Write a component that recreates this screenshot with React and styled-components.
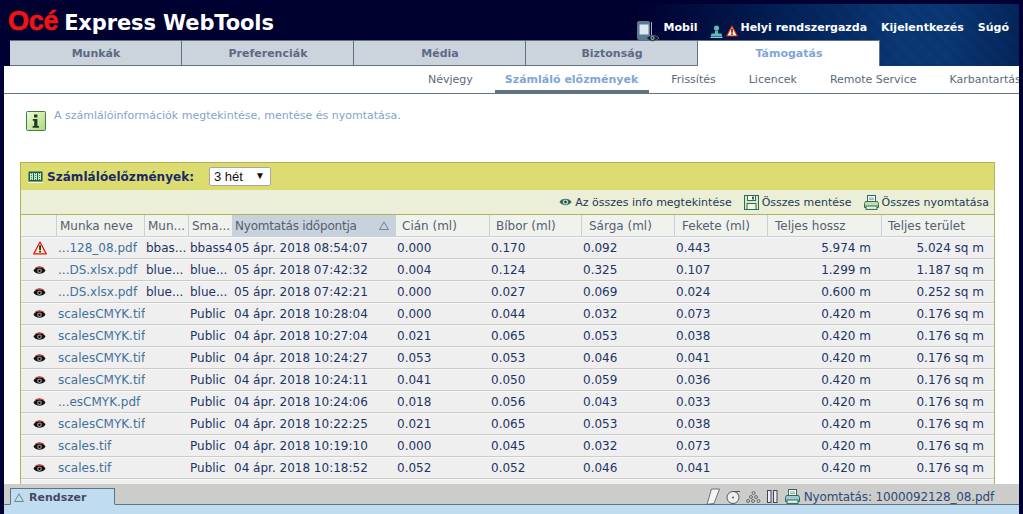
import React from "react";
import styled, { createGlobalStyle } from "styled-components";

const Global = createGlobalStyle`
  html, body { margin: 0; padding: 0; height: 100%; background: #000033; overflow: hidden; }
  #root { height: 100%; }
  * { box-sizing: border-box; }
`;
const Page = styled.div`
  width: 1023px; height: 514px; padding: 0 4px; display: flex; flex-direction: column;
  font-family: "DejaVu Sans", Verdana, sans-serif; overflow: hidden;
`;
const Header = styled.header`
  height: 62px; margin-top: 4px; flex: none; display: flex; flex-direction: column;
  background:
    repeating-linear-gradient(45deg, rgba(0,0,0,.12) 0 1px, transparent 1px 2px),
    linear-gradient(90deg, #000033 0, #000033 62%, #022058 76%, #0a3a7a 88%, #0a3a7a 93%, #05275f 100%);
`;
const TopRow = styled.div`
  height: 36px; display: flex; align-items: flex-start; justify-content: space-between; padding-left: 4px;
`;
const Logo = styled.div`display: flex; align-items: baseline; gap: 6px; padding-top: 2px;`;
const LogoRed = styled.span`
  font: 900 27px/30px "Liberation Sans", Arial, sans-serif; color: #f01414; letter-spacing: -.3px;
  -webkit-text-stroke: .6px #f01414;
`;
const LogoWhite = styled.span`
  font: 700 21px/30px "DejaVu Sans", Verdana, sans-serif; color: #fff; letter-spacing: -.12px;
`;
const UserNav = styled.nav`display: flex; align-items: center; height: 42px; padding-right: 10px; position: relative; top: 2px;`;
const UserLink = styled.span`
  font-size: 11px; font-weight: 700; color: #fff; white-space: nowrap; margin-left: ${p => p.$gap || 0}px;
`;
const IconSlot = styled.span`display: inline-flex; flex: none; margin-left: ${p => p.$gap || 0}px; position: relative; top: ${p => p.$top || 0}px;`;
const Tabs = styled.div`display: flex; height: 26px; padding-left: 6px; flex: none;`;
const Tab = styled.div`
  width: ${p => p.$active ? 182 : 172}px; height: 26px; display: flex; align-items: center; justify-content: center;
  font-size: 11px; font-weight: 700; padding-left: 1px;
  background: ${p => p.$active ? "#fff" : "#cbd4dc"};
  color: ${p => p.$active ? "#7fa6d6" : "#5b6a85"};
  border-top: 1px solid #5f7383;
  border-right: 1px solid #5f7383;
  border-bottom: ${p => p.$active ? "none" : "1px solid #5f7383"};
`;
const SubNav = styled.nav`
  height: 28px; flex: none; background: #fff; border-bottom: 1px solid #5f7383; display: flex; padding-left: 413px; overflow: hidden; gap: 11px;
`;
const SubItem = styled.span`
  height: 27px; padding: 2px 11px 0 ${p => p.$active ? 10 : 11}px; display: flex; align-items: center; white-space: nowrap; font-size: 11px;
  color: ${p => p.$active ? "#7fa6d6" : "#5a6a78"}; font-weight: ${p => p.$active ? 700 : 400};
  border-bottom: 3px solid ${p => p.$active ? "#5f7383" : "transparent"};
`;
const Main = styled.main`flex: 1; min-height: 0; background: #fff; overflow: hidden; padding: 17px 24px 0 16px;`;
const Info = styled.div`display: flex; align-items: flex-start; gap: 8px; padding-left: 6px; height: 51px; font-size: 11px; color: #85a3cc;`;
const InfoText = styled.span`position: relative; top: -2px;`;
const Panel = styled.section`border: 1px solid #b3b15a; border-bottom: none; width: 975px;`;
const TitleBar = styled.div`height: 27px; background: #dcdc70; display: flex; align-items: center; padding-left: 7px;`;
const Title = styled.span`font-size: 12px; font-weight: 700; color: #1b2a66; margin-left: 4px; width: 162px; white-space: nowrap; letter-spacing: .05px;`;
const FakeSelect = styled.div`
  width: 62px; height: 19px; background: #fff; border: 1px solid #a6a6a6; border-radius: 2px;
  font: 13px/17px "Liberation Sans", Arial, sans-serif; color: #111; padding: 0 5px 0 4px; display: flex; justify-content: space-between;
`;
const Arrow = styled.span`font-size: 10px; line-height: 16px;`;
const ActionBar = styled.div`
  height: 25px; background: #ebefd8; border-bottom: 1px solid #b3b15a; display: flex; align-items: center; justify-content: flex-end; padding-right: 5px; font-size: 11px; color: #233a50;
`;
const Action = styled.span`display: flex; align-items: center; gap: 3px; margin-left: 12px; white-space: nowrap;`;
const Table = styled.table`
  border-collapse: separate; border-spacing: 0; table-layout: fixed; width: 973px; font-size: 12px;
`;
const Th = styled.th`
  height: 22px; font-weight: 400; text-align: left; color: #55606e; white-space: nowrap; overflow: hidden; padding: 0 0 0 ${p => p.$pad ?? 6}px;
  background: ${p => p.$sorted ? "#c8d2dc" : "#f0f2ee"};
  border-right: 1px solid #c6d0d6; border-bottom: 1px solid #c6d0d6;
  &:last-child { border-right: none; }
`;
const SortLabel = styled.span`letter-spacing: -.2px;`;
const SortWrap = styled.span`display: flex; justify-content: space-between; padding-right: 6px; align-items: center;`;
const Tr = styled.tr`background: #efefef;`;
const Td = styled.td`
  height: 22px; padding: 0 ${p => p.$right || 0}px 0 1px; white-space: nowrap; overflow: hidden;
  color: ${p => p.$link ? "#41729c" : "#1d3566"}; text-align: ${p => p.$right ? "right" : "left"};
  border-top: 1px solid #f8f8f8; border-bottom: 1px solid #c9ccc9;
`;
const IconCell = styled.div`display: flex; justify-content: center; align-items: center;`;
const Footer = styled.footer`flex: none; height: 30px; display: flex; flex-direction: column; background: #c0dcf0;`;
const FootBar = styled.div`
  height: 21px; background: #cccccb; border-bottom: 1px solid #5f7383; display: flex; justify-content: space-between; align-items: flex-end; padding: 0 25px 0 6px;
`;
const FootTab = styled.div`
  width: 105px; height: 17px; margin-bottom: -1px; background: #c0dcf0; border: 1px solid #5f7383; border-bottom-color: #c0dcf0;
  display: flex; align-items: center; gap: 5px; padding: 1px 0 0 3px; font-size: 11px; font-weight: 700; color: #444a66;
`;
const Status = styled.div`display: flex; align-items: center; height: 20px; padding-top: 5px; font-size: 12px; color: #2c4a78; gap: 6px; letter-spacing: -.14px;`;
const StatusText = styled.span`margin-left: -2px;`;

const Eye = () => (
  <svg width="13" height="9" viewBox="0 0 14 10">
    <path d="M0.3 5 C3 .2 11 .2 13.7 5 C11 9.8 3 9.8 .3 5Z" fill="#111" />
    <path d="M2 2.6 C5 0.5 9 0.5 12 2.6" stroke="#d01818" strokeWidth="1.2" fill="none" />
    <circle cx="7" cy="5.4" r="2.7" fill="#8a8a8a" />
    <circle cx="7" cy="5.4" r="1.2" fill="#000" />
  </svg>
);
const EyeGreen = () => (
  <svg width="13" height="10" viewBox="0 0 14 10">
    <path d="M0.5 5 C3 .5 11 .5 13.5 5 C11 9.5 3 9.5 .5 5Z" fill="#2f6a5a" />
    <circle cx="7" cy="5" r="2.8" fill="#b9d7c9" />
    <circle cx="7" cy="5" r="1.3" fill="#12352c" />
  </svg>
);
const Warning = ({ s = 14 }) => (
  <svg width={s} height={s} viewBox="0 0 15 15">
    <path d="M7.5 1 L14.2 13.8 H.8Z" fill="#fff6c8" stroke="#e81010" strokeWidth="1.3" strokeLinejoin="round" />
    <rect x="6.6" y="4.6" width="1.9" height="5" fill="#222" />
    <rect x="6.6" y="10.4" width="1.9" height="1.9" fill="#222" />
  </svg>
);
const InfoIcon = () => (
  <svg width="20" height="20" viewBox="0 0 20 20">
    <defs><linearGradient id="ig" x1="0" y1="0" x2="1" y2="1"><stop offset="0" stopColor="#f4fbdc" /><stop offset="1" stopColor="#a8d878" /></linearGradient></defs>
    <rect x=".5" y=".5" width="19" height="19" rx="1" fill="url(#ig)" stroke="#3e7c4a" />
    <rect x="8" y="3.5" width="3.4" height="3" fill="#1e3a22" />
    <path d="M6.8 8 h4.6 v7 h1.6 v1.8 h-6.4 v-1.8 h1.6 v-5.2 h-1.4z" fill="#1e3a22" />
  </svg>
);
const Counter = () => (
  <svg width="15" height="12" viewBox="0 0 15 12">
    <rect x=".5" y=".5" width="14" height="10" fill="#1e5a4e" />
    {[2, 6, 10].map(x => <rect key={x} x={x} y="2" width="3" height="7" fill="#c8e8c0" />)}
    <path d="M3.5 2v7M7.5 2v7M11.5 2v7" stroke="#1e5a4e" strokeWidth=".8" strokeDasharray="1 1" />
    <path d="M0 11.5 h15" stroke="#f0f8f0" />
  </svg>
);
const Floppy = () => (
  <svg width="15" height="15" viewBox="0 0 15 15">
    <rect x=".5" y=".5" width="14" height="14" fill="#d8ecc0" stroke="#2f6a5a" />
    <rect x="3.5" y=".5" width="8" height="5" fill="#fff" stroke="#2f6a5a" />
    <rect x="8" y="1.5" width="2" height="3" fill="#2f6a5a" />
    <rect x="3" y="8.5" width="9" height="6" fill="#eef6e0" stroke="#2f6a5a" />
  </svg>
);
const Printer = ({ fill = "#bfe0a8", stroke = "#2f6a5a" }) => (
  <svg width="15" height="15" viewBox="0 0 15 15">
    <rect x="3.5" y=".5" width="8" height="6" fill="#fff" stroke={stroke} />
    <path d="M1.5 6.5 h12 l1 2 v4 h-14 v-4z" fill={fill} stroke={stroke} />
    <rect x="2" y="11" width="11" height="3.4" fill="#e6f2da" stroke={stroke} />
    <path d="M5 3h5M5 4.7h5" stroke={stroke} strokeWidth=".6" />
  </svg>
);
const Person = () => (
  <svg width="13" height="13" viewBox="0 0 13 13">
    <circle cx="6.5" cy="3" r="2.6" fill="#58bcb8" />
    <path d="M5.3 5.4 h2.4 l.6 3.2 h3.2 l.8 3 H.7 l.8-3 h3.2z" fill="#58bcb8" />
    <path d="M.5 12.4 h12" stroke="#a8d8e8" />
  </svg>
);
const Mobile = () => (
  <svg width="23" height="24" viewBox="0 0 23 24">
    <rect x="0" y="1" width="13" height="19" rx="2" fill="#5a7a92" />
    <rect x="2.5" y="4.5" width="9" height="10" fill="#dfe8f2" />
    <path d="M14.5 2v13" stroke="#aab" strokeWidth="1" />
    <path d="M9.5 18 C12 14.5 19 14.5 22 18 C19 22 12 22 9.5 18Z" fill="#10202c" stroke="#789" strokeWidth=".7" />
    <circle cx="15.5" cy="18" r="2" fill="#9ab" />
    <circle cx="15.5" cy="18" r=".9" fill="#123" />
  </svg>
);
const Triangle = () => (
  <svg width="10" height="9" viewBox="0 0 10 9"><path d="M5 .8 L9.4 8.5 H.6Z" fill="none" stroke="#6a7a8a" strokeWidth=".9" /></svg>
);
const Paper = () => (
  <svg width="14" height="17" viewBox="0 0 14 17"><path d="M5.5 1 h8 L8 15.5 l-7 .8Z" fill="#f4f4f4" stroke="#555" strokeWidth=".8" /></svg>
);
const Disc = () => (
  <svg width="14" height="14" viewBox="0 0 14 14"><circle cx="7" cy="7.5" r="6" fill="#eee" stroke="#555" /><circle cx="7" cy="7.5" r="1" fill="#555" /><path d="M7 1.5 h7" stroke="#555" /></svg>
);
const Dots = () => (
  <svg width="15" height="12" viewBox="0 0 15 12" fill="none" stroke="#555" strokeWidth=".8">
    {[[7.5, 2], [5, 6], [10, 6], [2, 10], [7, 10], [12.5, 10]].map(([x, y], i) => <circle key={i} cx={x} cy={y} r="1.5" />)}
  </svg>
);
const Pause = () => (
  <svg width="11" height="14" viewBox="0 0 11 14" fill="#e8eef2" stroke="#445"><rect x=".5" y=".5" width="3.5" height="12" /><rect x="6.5" y=".5" width="3.5" height="12" /></svg>
);

const cols = [36, 88, 44, 44, 163, 94, 92, 93, 93, 114, 112];
const heads = [["Cián (ml)", 6], ["Bíbor (ml)", 6], ["Sárga (ml)", 7], ["Fekete (ml)", 7], ["Teljes hossz", 7], ["Teljes terület", 6]];
const rows = [
  ["w", "...128_08.pdf", "bbas...", "bbass4", "05 ápr. 2018 08:54:07", "0.000", "0.170", "0.092", "0.443", "5.974 m", "5.024 sq m"],
  ["e", "...DS.xlsx.pdf", "blue...", "blue...", "05 ápr. 2018 07:42:32", "0.004", "0.124", "0.325", "0.107", "1.299 m", "1.187 sq m"],
  ["e", "...DS.xlsx.pdf", "blue...", "blue...", "05 ápr. 2018 07:42:21", "0.000", "0.027", "0.069", "0.024", "0.600 m", "0.252 sq m"],
  ["e", "scalesCMYK.tif", "", "Public", "04 ápr. 2018 10:28:04", "0.000", "0.044", "0.032", "0.073", "0.420 m", "0.176 sq m"],
  ["e", "scalesCMYK.tif", "", "Public", "04 ápr. 2018 10:27:04", "0.021", "0.065", "0.053", "0.038", "0.420 m", "0.176 sq m"],
  ["e", "scalesCMYK.tif", "", "Public", "04 ápr. 2018 10:24:27", "0.053", "0.053", "0.046", "0.041", "0.420 m", "0.176 sq m"],
  ["e", "scalesCMYK.tif", "", "Public", "04 ápr. 2018 10:24:11", "0.041", "0.050", "0.059", "0.036", "0.420 m", "0.176 sq m"],
  ["e", "...esCMYK.pdf", "", "Public", "04 ápr. 2018 10:24:06", "0.018", "0.056", "0.043", "0.033", "0.420 m", "0.176 sq m"],
  ["e", "scalesCMYK.tif", "", "Public", "04 ápr. 2018 10:22:25", "0.021", "0.065", "0.053", "0.038", "0.420 m", "0.176 sq m"],
  ["e", "scales.tif", "", "Public", "04 ápr. 2018 10:19:10", "0.000", "0.045", "0.032", "0.073", "0.420 m", "0.176 sq m"],
  ["e", "scales.tif", "", "Public", "04 ápr. 2018 10:18:52", "0.052", "0.052", "0.046", "0.041", "0.420 m", "0.176 sq m"],
];

export default function App() {
  return (
    <Page>
      <Global />
      <Header>
        <TopRow>
          <Logo><LogoRed>Océ</LogoRed><LogoWhite>Express WebTools</LogoWhite></Logo>
          <UserNav>
            <IconSlot $top={5}><Mobile /></IconSlot>
            <UserLink $gap={4}>Mobil</UserLink>
            <IconSlot $gap={13} $top={4}><Person /></IconSlot>
            <IconSlot $gap={3} $top={4}><Warning s={12} /></IconSlot>
            <UserLink $gap={2}>Helyi rendszergazda</UserLink>
            <UserLink $gap={14}>Kijelentkezés</UserLink>
            <UserLink $gap={14}>Súgó</UserLink>
          </UserNav>
        </TopRow>
        <Tabs>
          <Tab>Munkák</Tab><Tab>Preferenciák</Tab><Tab>Média</Tab><Tab>Biztonság</Tab><Tab $active>Támogatás</Tab>
        </Tabs>
      </Header>
      <SubNav>
        <SubItem>Névjegy</SubItem>
        <SubItem $active>Számláló előzmények</SubItem>
        <SubItem>Frissítés</SubItem>
        <SubItem>Licencek</SubItem>
        <SubItem>Remote Service</SubItem>
        <SubItem>Karbantartás</SubItem>
      </SubNav>
      <Main>
        <Info><InfoIcon /><InfoText>A számlálóinformációk megtekintése, mentése és nyomtatása.</InfoText></Info>
        <Panel>
          <TitleBar><Counter /><Title>Számlálóelőzmények:</Title><FakeSelect>3 hét<Arrow>▼</Arrow></FakeSelect></TitleBar>
          <ActionBar>
            <Action><EyeGreen />Az összes info megtekintése</Action>
            <Action><Floppy />Összes mentése</Action>
            <Action><Printer />Összes nyomtatása</Action>
          </ActionBar>
          <Table>
            <colgroup>{cols.map((w, i) => <col key={i} style={{ width: w }} />)}</colgroup>
            <thead>
              <tr>
                <Th />
                <Th $pad={3}>Munka neve</Th>
                <Th $pad={3}>Mun...</Th>
                <Th $pad={3}>Sma...</Th>
                <Th $pad={2} $sorted><SortWrap><SortLabel>Nyomtatás időpontja</SortLabel><Triangle /></SortWrap></Th>
                {heads.map(([h, pad]) => <Th key={h} $pad={pad}>{h}</Th>)}
              </tr>
            </thead>
            <tbody>
              {rows.map((r, i) => (
                <Tr key={i}>
                  <Td><IconCell>{r[0] === "w" ? <Warning /> : <Eye />}</IconCell></Td>
                  <Td $link>{r[1]}</Td>
                  <Td>{r[2]}</Td>
                  <Td>{r[3]}</Td>
                  <Td>{r[4]}</Td>
                  {r.slice(5, 9).map((v, j) => <Td key={j}>{v}</Td>)}
                  <Td $right={11}>{r[9]}</Td>
                  <Td $right={10}>{r[10]}</Td>
                </Tr>
              ))}
              <Tr><Td colSpan={11} /></Tr>
            </tbody>
          </Table>
        </Panel>
      </Main>
      <Footer>
        <FootBar>
          <FootTab><Triangle />Rendszer</FootTab>
          <Status><Paper /><Disc /><Dots /><Pause /><IconSlot $gap={1}><Printer fill="#9ccbd8" /></IconSlot><StatusText>Nyomtatás: 1000092128_08.pdf</StatusText></Status>
        </FootBar>
      </Footer>
    </Page>
  );
}
